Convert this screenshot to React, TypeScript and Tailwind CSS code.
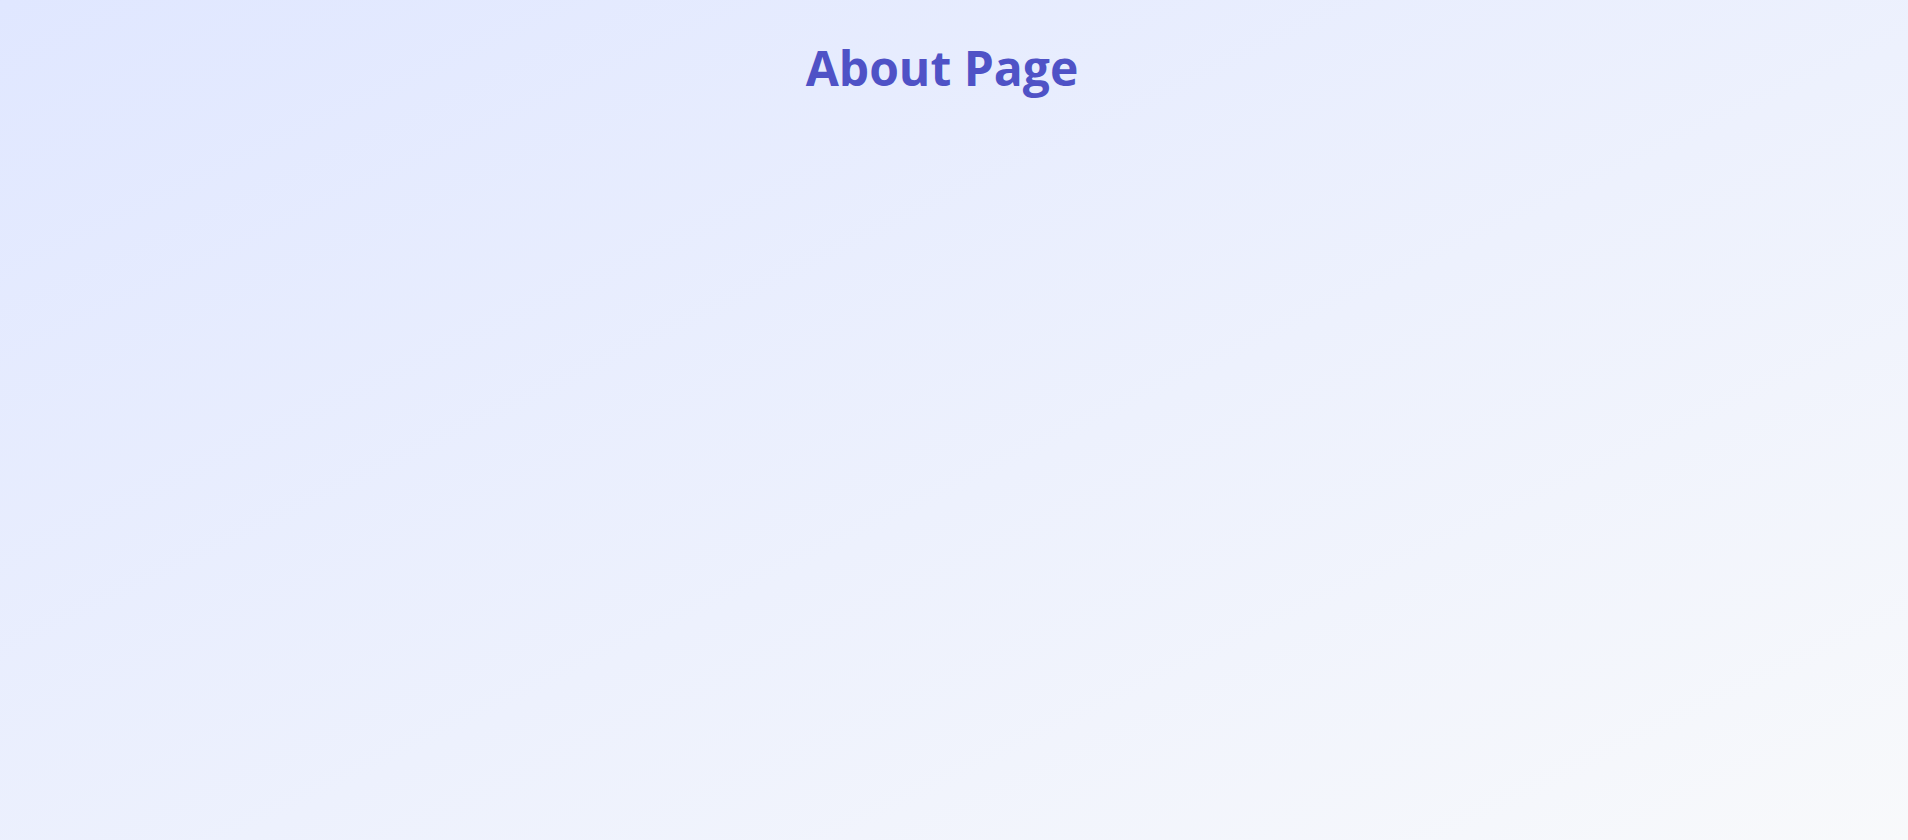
export default function App() {
  return (
    <div className="min-h-[912px] bg-linear-to-br from-[#e0e7ff] to-[#f9fafb] pl-8 pr-14 pt-11 pb-8 font-['Open_Sans',sans-serif]">
      <h1 className="text-center text-5xl font-bold text-[#4f52c6]">About Page</h1>
    </div>
  );
}
